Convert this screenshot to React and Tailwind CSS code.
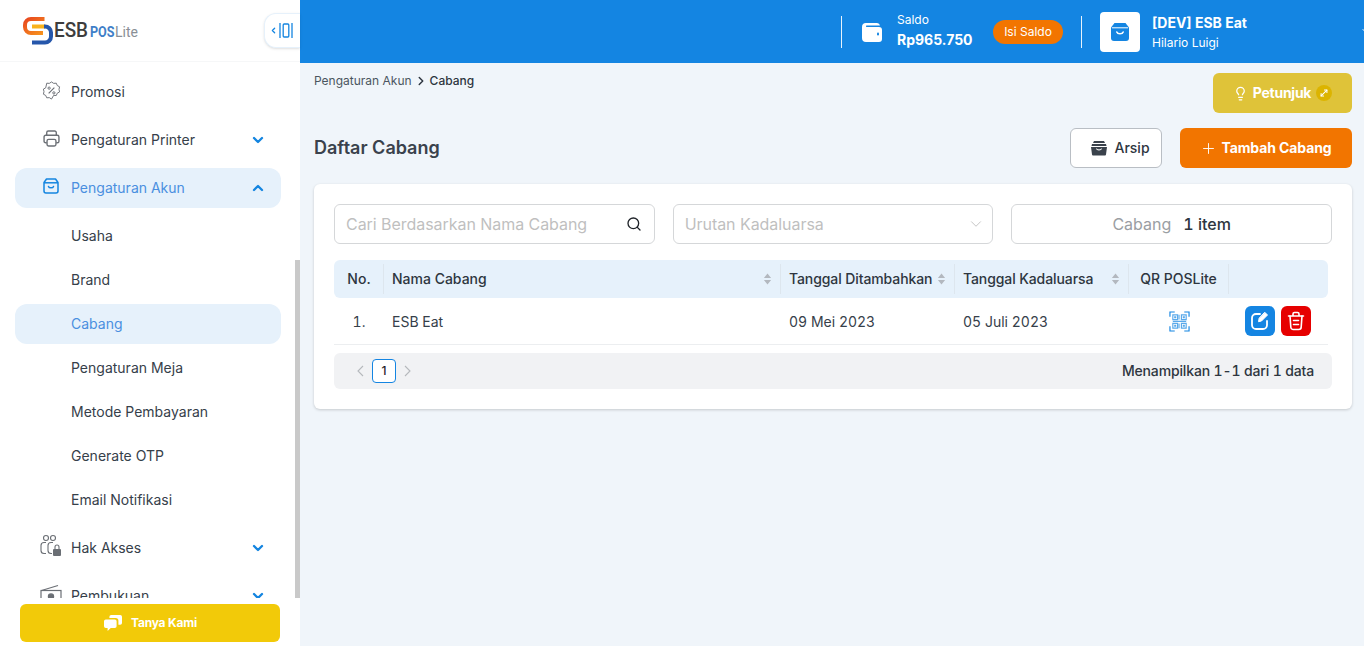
import { ChevronDown, ChevronUp, ChevronLeft, ChevronRight, Search, Plus, Lightbulb, MoveDiagonal } from "lucide-react";

const inter = "font-['Inter',sans-serif]";

const BagIcon = ({ className }) => (
  <svg viewBox="0 0 16 16" fill="none" stroke="currentColor" strokeWidth="1.500" className={className}>
    <path d="M3.500 1h9L15 4.500V13a2 2 0 0 1-2 2H3a2 2 0 0 1-2-2V4.500z" strokeLinejoin="round" />
    <path d="M1 4.800h14" />
    <path d="M5.500 8.500c.6 1.800 4.400 1.800 5 0" strokeLinecap="round" />
  </svg>
);

const BagSolid = ({ className }) => (
  <svg viewBox="0 0 20 20" className={className}>
    <path d="M4.500 1h11L19 5.500V16a3 3 0 0 1-3 3H4a3 3 0 0 1-3-3V5.500z" fill="currentColor" />
    <path d="M2 5.800h16" stroke="white" strokeWidth="1" />
    <path d="M6.800 10c.8 2.400 5.600 2.400 6.400 0" fill="none" stroke="white" strokeWidth="1.600" strokeLinecap="round" />
  </svg>
);

const PromoIcon = ({ className }) => (
  <svg viewBox="0 0 20 20" fill="none" stroke="currentColor" strokeWidth="1" className={className}>
    <path d="M10 1l2.300 1.500 2.700-.2 1.100 2.500 2.400 1.300-.6 2.700.6 2.700-2.400 1.300-1.100 2.500-2.700-.2L10 19l-2.300-1.500-2.700.2-1.100-2.500-2.400-1.300.6-2.700-.6-2.700 2.400-1.300L5 2.300l2.700.2z" strokeLinejoin="round" />
    <path d="M7 13l6-6" strokeWidth="1.200" />
    <circle cx="7.500" cy="7.500" r="1.200" />
    <circle cx="12.500" cy="12.500" r="1.200" />
  </svg>
);

const PrinterIcon = ({ className }) => (
  <svg viewBox="0 0 16 16" fill="none" stroke="currentColor" strokeWidth="1.300" className={className}>
    <path d="M3.500 5V2.500a1.500 1.500 0 0 1 1.500-1.500h6a1.500 1.500 0 0 1 1.500 1.500V5" />
    <path d="M3.500 12H2.500A1.500 1.500 0 0 1 1 10.500v-4A1.500 1.500 0 0 1 2.500 5h11A1.500 1.500 0 0 1 15 6.500v4a1.500 1.500 0 0 1-1.500 1.500h-1" />
    <rect x="3.800" y="8.800" width="8.400" height="6.200" rx="1.500" />
  </svg>
);

const AccessIcon = ({ className }) => (
  <svg viewBox="0 0 22 24" fill="none" stroke="currentColor" strokeWidth="1.100" className={className}>
    <circle cx="6" cy="4" r="2.500" />
    <circle cx="13" cy="4" r="2.500" />
    <path d="M6 8.500H4a3 3 0 0 0-3 3v5a3 3 0 0 0 3 3h2" />
    <path d="M13 8.500H11a3 3 0 0 0-3 3v5a3 3 0 0 0 3 3h1" />
    <rect x="13" y="15" width="8" height="7" rx="1" fill="currentColor" stroke="none" />
    <path d="M15 15v-2a2 2 0 0 1 4 0v2" />
  </svg>
);

const BookIcon = ({ className }) => (
  <svg viewBox="0 0 22 20" fill="none" stroke="currentColor" strokeWidth="1.200" className={className}>
    <path d="M1.500 6.500L18 1.500" />
    <rect x="1" y="6.500" width="20" height="12" />
    <circle cx="11" cy="12.500" r="2.600" fill="currentColor" />
  </svg>
);

const SortIcon = () => (
  <svg viewBox="0 0 10 14" className="w-[9px] h-[14px] shrink-0" fill="#b3b8bf">
    <path d="M5 1l4 5H1zM5 13L1 8h8z" />
  </svg>
);

const Logo = () => (
  <div className="flex items-center">
    <svg viewBox="0 0 30 30" className="w-[30px] h-[30px]" fill="none" strokeWidth="4">
      <defs>
        <linearGradient id="logoTop" x1="0" y1="0" x2="1" y2="1">
          <stop offset="0" stopColor="#e8481f" />
          <stop offset="1" stopColor="#f7941d" />
        </linearGradient>
      </defs>
      <path d="M21.500 3H8a6 6 0 0 0-6 6v2a6 6 0 0 0 6 6h12" stroke="url(#logoTop)" />
      <path d="M9 10.500h13" stroke="#f9b21c" />
      <path d="M21 10.500h1a6 6 0 0 1 6 6v4a6 6 0 0 1-6 6H9" stroke="#2657ab" />
    </svg>
    <span className="ml-[1px] text-[21px] leading-none font-medium text-[#3d3d3d] font-['Roboto',sans-serif] scale-x-90 origin-left w-[34px]">ESB</span>
    <span className="ml-[2px] text-[14px] leading-none font-bold text-[#3f7fc8] font-['Roboto',sans-serif] mt-[3px] scale-x-90 origin-left w-[25px]">POS</span>
    <span className="text-[14px] leading-none text-[#8a8f96] font-['Roboto',sans-serif] mt-[3px]">Lite</span>
  </div>
);

const TopItem = ({ icon, label, open, active, hasChild }) => (
  <div className={`h-10 rounded-xl flex items-center pl-[27px] pr-[15px] shrink-0 ${active ? "bg-[#e6f1fb] text-[#4a8fe0]" : "text-[#36404a]"}`}>
    <span className={`w-[18px] h-[18px] flex items-center justify-center mr-[11px] -mt-1 ${active ? "text-[#1485e0]" : "text-[#6b6f75]"}`}>{icon}</span>
    <span className="flex-1 text-sm">{label}</span>
    {hasChild && (open
      ? <ChevronUp className="w-4 h-4 text-[#1485e0]" strokeWidth={3.500} />
      : <ChevronDown className="w-4 h-4 text-[#1485e0]" strokeWidth={3.500} />)}
  </div>
);

const subMenu = ["Usaha", "Brand", "Cabang", "Pengaturan Meja", "Metode Pembayaran", "Generate OTP", "Email Notifikasi"];

const Sidebar = () => (
  <aside className="w-[300px] h-full shrink-0 bg-white flex flex-col relative">
    <div className="h-[62px] shrink-0 flex items-center pl-[23px] border-b border-[#f6f7f8]">
      <Logo />
    </div>
    {/* toggle sticks out of the logo bar */}
    <div className="absolute left-[264px] top-[13px] w-[36px] h-[35px] bg-white border border-r-0 border-[#e6f1fb] rounded-l-xl flex items-center pl-[4px] gap-[1px] text-[#1485e0] shadow-sm">
      <ChevronLeft className="w-[9px] h-[11px] shrink-0" strokeWidth={3.500} />
      <svg viewBox="0 0 14 15" className="w-[14px] h-[15px] shrink-0" fill="none" stroke="currentColor" strokeWidth="1.300">
        <path d="M1 0v15M13 0v15" />
        <rect x="4.200" y="1" width="5.600" height="13" rx="1" />
      </svg>
    </div>
    <div className="flex-1 min-h-0 overflow-hidden pt-[10px] px-[15px] pr-[19px] flex flex-col gap-2">
      <TopItem icon={<PromoIcon className="w-[19px] h-[19px] shrink-0" />} label="Promosi" />
      <TopItem icon={<PrinterIcon className="w-[17px] h-[17px] shrink-0" />} label="Pengaturan Printer" hasChild />
      <TopItem icon={<BagIcon className="w-4 h-4 shrink-0" />} label="Pengaturan Akun" hasChild open active />
      <div className="flex flex-col gap-1 shrink-0">
        {subMenu.map((item) => (
          <div key={item} className={`h-10 rounded-xl flex items-center pl-[56px] text-sm ${item === "Cabang" ? "bg-[#e6f1fb] text-[#4a8fe0]" : "text-[#36404a]"}`}>
            {item}
          </div>
        ))}
      </div>
      <TopItem icon={<AccessIcon className="w-[22px] h-[24px] shrink-0" />} label="Hak Akses" hasChild />
      <TopItem icon={<BookIcon className="w-[22px] h-[20px] shrink-0" />} label="Pembukuan" hasChild />
    </div>
    <div className="absolute right-0 top-[260px] w-[5px] h-[338px] bg-[#c9c9c9]" />
    <div className="shrink-0 h-[48px] px-5 pt-[6px]">
      <button className="w-full h-[38px] rounded-md bg-[#f2ca09] flex items-center justify-center gap-2 text-white text-xs font-bold tracking-[-0.2px]">
        <svg viewBox="0 0 22 20" className="w-5 h-[18px]" fill="currentColor">
          <path d="M9 1h10a2 2 0 0 1 2 2v7a2 2 0 0 1-2 2h-2V7.500A3 3 0 0 0 14 4.500H7V3a2 2 0 0 1 2-2z" />
          <path d="M3 6h10a2 2 0 0 1 2 2v5.500a2 2 0 0 1-2 2H8.500L5 19v-3.500H3a2 2 0 0 1-2-2V8a2 2 0 0 1 2-2z" />
        </svg>
        Tanya Kami
      </button>
    </div>
  </aside>
);

const Header = () => (
  <header className="h-[63px] shrink-0 bg-[#1485e2] flex items-center pl-[541px] text-white overflow-hidden">
    <div className="w-px h-8 bg-white/90 shrink-0" />
    <svg viewBox="0 0 20 20" className="w-5 h-5 ml-5 shrink-0" fill="white">
      <path d="M4 1h11a3 3 0 0 1 3 2.500H4.500a.8.8 0 0 0 0 1.500H17a3 3 0 0 1 3 3v9a3 3 0 0 1-3 3H4a4 4 0 0 1-4-4V5a4 4 0 0 1 4-4z" />
      <rect x="15" y="10.500" width="2" height="3" rx="1" fill="#1485e2" />
    </svg>
    <div className="ml-[15px] w-[96px] shrink-0 flex flex-col -mt-[2px]">
      <span className="text-xs leading-4">Saldo</span>
      <span className="text-sm font-bold leading-[18px] mt-[3px]">Rp965.750</span>
    </div>
    <button className="w-[70px] h-6 shrink-0 rounded-full bg-[#f27500] text-xs text-white">Isi Saldo</button>
    <div className="w-px h-8 bg-white/90 ml-[18px] shrink-0" />
    <div className="w-10 h-10 shrink-0 rounded bg-white ml-[18px] flex items-center justify-center text-[#1485e2]">
      <BagSolid className="w-5 h-5" />
    </div>
    <div className="ml-3 flex flex-col w-[208px] shrink-0">
      <span className="text-sm font-bold leading-5">[DEV] ESB Eat</span>
      <span className="text-xs leading-4 mt-[2px]">Hilario Luigi</span>
    </div>
    <ChevronDown className="w-3 h-3 shrink-0 mt-[-2px]" />
  </header>
);

const th = "flex items-center h-[30px] border-r border-[#dde6ee] text-sm font-medium text-[#2e3640] whitespace-nowrap";

const BranchCard = () => (
  <section className="h-[225px] mt-4 bg-white rounded-md shadow-[0_1px_3px_rgba(0,0,0,0.18)] p-5">
    <div className="grid grid-cols-3 gap-[18px]">
      <div className="h-10 rounded-md border border-[#d5d7d9] flex items-center pl-[11px] pr-3 text-base text-[#bfbfbf] tracking-[-0.05px]">
        <span className="flex-1">Cari Berdasarkan Nama Cabang</span>
        <Search className="w-4 h-4 text-[#1f2329]" strokeWidth={2} />
      </div>
      <div className="h-10 rounded-md border border-[#d5d7d9] flex items-center pl-[11px] pr-[7px] text-base text-[#bfbfbf] tracking-[-0.05px]">
        <span className="flex-1">Urutan Kadaluarsa</span>
        <ChevronDown className="w-[18px] h-[18px] text-[#c4c4c4]" strokeWidth={1.300} />
      </div>
      <div className="h-10 rounded-md border border-[#d5d7d9] flex items-center justify-center gap-3 text-base">
        <span className="text-[#9a9ea3]">Cabang</span>
        <span className="font-medium text-[#2e3640] tabular-nums">1 item</span>
      </div>
    </div>

    <div className="mt-4 mr-1">
      <div className="grid grid-cols-[50px_397px_174px_174px_100px_99px] h-[38px] items-center bg-[#e6f1fb] rounded-md">
        <div className={`${th} justify-center pl-[1px]`}>No.</div>
        <div className={`${th} justify-between pl-2 pr-[8px]`}>Nama Cabang<SortIcon /></div>
        <div className={`${th} justify-between pl-2 pr-[8px] tracking-[-0.1px]`}>Tanggal Ditambahkan<SortIcon /></div>
        <div className={`${th} justify-between pl-2 pr-[8px] tracking-[-0.1px]`}>Tanggal Kadaluarsa<SortIcon /></div>
        <div className={`${th} justify-center`}>QR POSLite</div>
        <div />
      </div>
      <div className="grid grid-cols-[50px_397px_174px_174px_100px_99px] h-[47px] items-center border-b border-[#eceef0] text-sm text-[#36404a] tabular-nums">
        <div className="text-center pt-[1px]">1.</div>
        <div className="pl-2 pt-[1px]">ESB Eat</div>
        <div className="pl-2 pt-[1px]">09 Mei 2023</div>
        <div className="pl-2 pt-[1px]">05 Juli 2023</div>
        <div className="flex justify-center">
          <svg viewBox="0 0 22 22" className="w-[21px] h-[21px]" fill="none" stroke="#1485e2" strokeWidth="1.200">
            <path d="M1 6V1h5M16 1h5v5M21 16v5h-5M6 21H1v-5" />
            <path d="M4 4h5v5H4zM13 4h5v5h-5zM4 13h5v5H4zM13 13h5v5h-5z" stroke="#5aa9ea" />
            <path d="M6 6h1v1H6zM15 6h1v1h-1zM6 15h1v1H6zM15 15h1v1h-1zM10.500 4v5M4 10.800h14M10.500 13v5" stroke="#5aa9ea" />
          </svg>
        </div>
        <div className="flex justify-center gap-[6px] pr-[1px]">
          <button className="w-[30px] h-[30px] rounded-md bg-[#1485e2] flex items-center justify-center text-white">
            <svg viewBox="0 0 20 20" className="w-5 h-5" fill="none" stroke="currentColor" strokeWidth="1.800" strokeLinecap="round">
              <path d="M10 3H6a4 4 0 0 0-4 4v7a4 4 0 0 0 4 4h7a4 4 0 0 0 4-4v-4" />
              <path d="M15 1.500l2.500 2.500-6 6-3 .7.600-3.200z" fill="currentColor" strokeWidth="1" strokeLinejoin="round" />
            </svg>
          </button>
          <button className="w-[30px] h-[30px] rounded-md bg-[#e60000] flex items-center justify-center text-white">
            <svg viewBox="0 0 18 20" className="w-[18px] h-5" fill="none" stroke="currentColor" strokeWidth="1.600" strokeLinecap="round" strokeLinejoin="round">
              <path d="M1.500 5h15M6 5V3a1.500 1.500 0 0 1 1.500-1.500h3A1.500 1.500 0 0 1 12 3v2" />
              <path d="M3 5l.8 11a2.500 2.500 0 0 0 2.500 2.500h5.400a2.500 2.500 0 0 0 2.500-2.500L15 5" />
              <path d="M6.500 9.500h5M6.500 13.500h5" />
            </svg>
          </button>
        </div>
      </div>
    </div>

    <div className="mt-2 h-9 rounded-md bg-[#f1f2f4] flex items-center pl-[22px] pr-[18px]">
      <svg viewBox="0 0 8 12" className="w-2 h-3" fill="none" stroke="#b5b8bc" strokeWidth="1.100"><path d="M7 1L2 6l5 5" /></svg>
      <div className="ml-2 w-6 h-6 rounded border border-[#1485e2] bg-white flex items-center justify-center text-xs font-medium text-[#1f2329]">1</div>
      <svg viewBox="0 0 8 12" className="w-2 h-3 ml-2" fill="none" stroke="#b5b8bc" strokeWidth="1.100"><path d="M1 1l5 5-5 5" /></svg>
      <span className="ml-auto text-sm font-medium text-[#2e3640] tabular-nums tracking-[-0.15px]">Menampilkan 1-1 dari 1 data</span>
    </div>
  </section>
);

export default function App() {
  return (
    <div className={`${inter} w-[1364px] h-[646px] flex overflow-hidden bg-[#f0f5fa]`}>
      <Sidebar />
      <main className="flex-1 min-w-0 flex flex-col">
        <Header />
        <div className="flex-1 pl-[14px] pr-3 pt-[10px]">
          <div className="flex justify-between items-start">
            <div className="flex items-center h-4 text-xs text-[#4b5560]">
              <span>Pengaturan Akun</span>
              <ChevronRight className="w-[14px] h-[14px] mx-[2px] text-[#2e3640]" strokeWidth={2.500} />
              <span className="font-medium text-[#2e3640]">Cabang</span>
            </div>
            <button className="w-[139px] h-10 rounded-md bg-[#dfc339] flex items-center justify-center gap-[5px] text-white text-sm font-bold tracking-[-0.25px]">
              <Lightbulb className="w-[15px] h-[15px]" strokeWidth={2} />
              Petunjuk
              <span className="w-4 h-4 rounded-full bg-[#dcb400] flex items-center justify-center">
                <MoveDiagonal className="w-[10px] h-[10px]" strokeWidth={2.500} />
              </span>
            </button>
          </div>
          <div className="mt-[15px] flex items-center h-10">
            <h1 className="text-lg font-semibold text-[#3a424c] flex-1">Daftar Cabang</h1>
            <button className="w-[92px] h-10 rounded-md bg-white border border-[#b9bec4] flex items-center justify-center gap-[6px] pl-2 text-sm font-medium text-[#2e3640]">
              <svg viewBox="0 0 18 16" className="w-[18px] h-4" fill="#3a424c">
                <path d="M4 1h10l1 2H3zM2 4h14l.500 2h-15z" />
                <path d="M1 7h16l-1 7.500a1 1 0 0 1-1 .900H3a1 1 0 0 1-1-.900zm5 1.500c.300 2.500 5.700 2.500 6 0H11c-.400 1.200-3.600 1.200-4 0z" fillRule="evenodd" />
              </svg>
              Arsip
            </button>
            <button className="ml-[18px] w-[172px] h-10 rounded-md bg-[#f27500] flex items-center justify-center gap-[4px] text-sm font-bold text-white tracking-[-0.1px]">
              <Plus className="w-[17px] h-[17px]" strokeWidth={1.300} />
              Tambah Cabang
            </button>
          </div>
          <BranchCard />
        </div>
      </main>
    </div>
  );
}
